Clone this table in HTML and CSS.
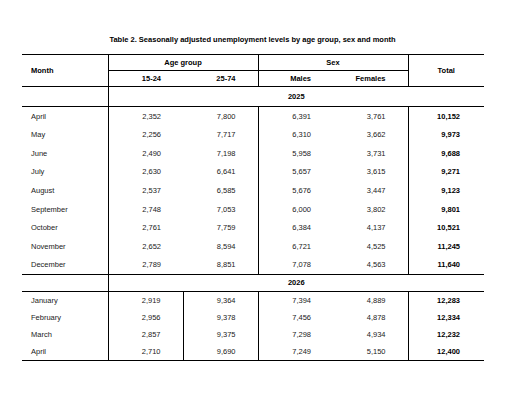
FILE: index.html
```html
<!DOCTYPE html>
<html lang="en">
<head>
    <meta charset="UTF-8">
    <meta name="viewport" content="width=device-width, initial-scale=1.0">
    <title>Table 2</title>
    <link rel="stylesheet" href="styles.css">
</head>
<body>
    <p class="title">Table 2. Seasonally adjusted unemployment levels by age group, sex and month</p>
    <table class="stats">
        <colgroup>
            <col class="col-month">
            <col class="col-num">
            <col class="col-num">
            <col class="col-num">
            <col class="col-num">
            <col class="col-total">
        </colgroup>
        <thead>
            <tr class="head-top">
                <th rowspan="2" class="month">Month</th>
                <th colspan="2" class="group sep">Age group</th>
                <th colspan="2" class="group sep">Sex</th>
                <th rowspan="2" class="total-head sep">Total</th>
            </tr>
            <tr class="head-sub">
                <th class="num sep">15-24</th>
                <th class="num">25-74</th>
                <th class="num sep">Males</th>
                <th class="num">Females</th>
            </tr>
        </thead>
        <tbody>
            <tr class="year">
                <td></td>
                <td colspan="5" class="sep">2025</td>
            </tr>
        </tbody>
        <tbody class="block-2025" id="rows2025"></tbody>
        <tbody>
            <tr class="year year-short">
                <td></td>
                <td colspan="5" class="sep">2026</td>
            </tr>
        </tbody>
        <tbody class="block-2026" id="rows2026"></tbody>
    </table>

    <script>
        const rows2025 = [
            ['April', '2,352', '7,800', '6,391', '3,761', '10,152'],
            ['May', '2,256', '7,717', '6,310', '3,662', '9,973'],
            ['June', '2,490', '7,198', '5,958', '3,731', '9,688'],
            ['July', '2,630', '6,641', '5,657', '3,615', '9,271'],
            ['August', '2,537', '6,585', '5,676', '3,447', '9,123'],
            ['September', '2,748', '7,053', '6,000', '3,802', '9,801'],
            ['October', '2,761', '7,759', '6,384', '4,137', '10,521'],
            ['November', '2,652', '8,594', '6,721', '4,525', '11,245'],
            ['December', '2,789', '8,851', '7,078', '4,563', '11,640']
        ];
        const rows2026 = [
            ['January', '2,919', '9,364', '7,394', '4,889', '12,283'],
            ['February', '2,956', '9,378', '7,456', '4,878', '12,334'],
            ['March', '2,857', '9,375', '7,298', '4,934', '12,232'],
            ['April', '2,710', '9,690', '7,249', '5,150', '12,400']
        ];

        function fillRows(id, rows) {
            document.getElementById(id).innerHTML = rows.map(r => `
                <tr>
                    <td class="month">${r[0]}</td>
                    <td class="num sep age-young">${r[1]}</td>
                    <td class="num">${r[2]}</td>
                    <td class="num sep">${r[3]}</td>
                    <td class="num">${r[4]}</td>
                    <td class="total sep">${r[5]}</td>
                </tr>
            `).join('');
        }

        fillRows('rows2025', rows2025);
        fillRows('rows2026', rows2026);
    </script>
</body>
</html>
```

FILE: styles.css
```css
body {
    font-family: "Liberation Sans", Arial, sans-serif;
    margin: 0;
    padding: 0;
    background-color: #fff;
    color: #222;
}

.title {
    margin: 0 0 0 22px;
    padding-top: 36px;
    width: 461px;
    height: 18px;
    text-align: center;
    font-size: 7.5px;
    line-height: 8px;
    font-weight: bold;
    color: #000;
}

.stats {
    margin-left: 22px;
    width: 461px;
    table-layout: fixed;
    border-collapse: collapse;
    font-size: 7.5px;
    border-top: 1px solid #000;
    border-bottom: 1px solid #000;
}

.col-month { width: 86px; }
.col-num { width: 75px; }
.col-total { width: 76px; }

.stats th, .stats td {
    padding: 0;
    vertical-align: middle;
}

.stats th {
    font-weight: bold;
    color: #000;
}

.stats .sep {
    border-left: 1px solid #000;
}

.stats .month {
    text-align: left;
    padding-left: 9px;
}

.stats .num {
    text-align: right;
    padding-right: 22px;
}

.head-top {
    height: 16px;
}

.head-top .group {
    text-align: center;
    border-bottom: 1px solid #000;
}

.head-sub {
    height: 16px;
    border-bottom: 1px solid #000;
}

.total-head {
    text-align: center;
}

.year {
    height: 20px;
    border-bottom: 1px solid #000;
}

.year td {
    text-align: center;
    font-weight: bold;
    color: #000;
}

.year-short {
    height: 17px;
}

.block-2025 tr {
    height: 18.67px;
}

.block-2025 {
    border-bottom: 1px solid #000;
}

.block-2026 tr {
    height: 17.3px;
}

.block-2026 .age-young {
    border-right: 1px solid #000;
}

.stats .total {
    text-align: right;
    padding-right: 24px;
    font-weight: bold;
    color: #000;
}
```
